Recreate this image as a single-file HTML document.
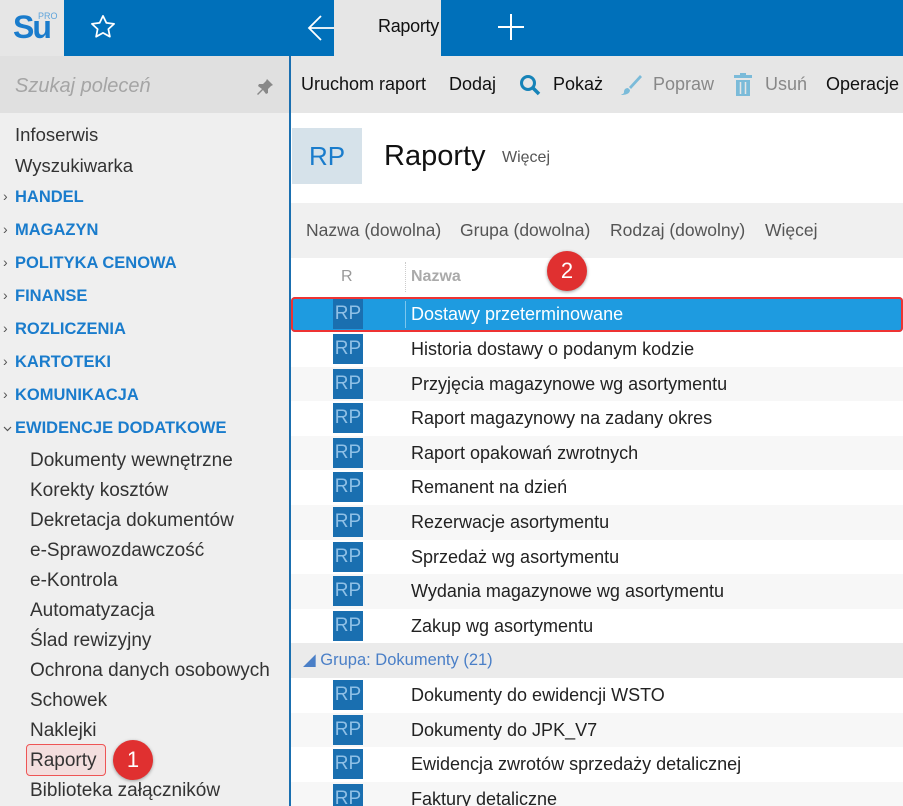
<!DOCTYPE html>
<html><head><meta charset="utf-8"><style>
*{margin:0;padding:0;box-sizing:border-box}
html,body{width:903px;height:806px;overflow:hidden}
body{font-family:"Liberation Sans",sans-serif;background:#fff;position:relative;color:#222}
.a{position:absolute;white-space:nowrap}
.side{left:0;top:113px;width:290px;height:693px;background:#efefef}
.si{left:15px;font-size:18.5px;color:#333}
.cat{left:15px;font-size:16.5px;font-weight:bold;color:#1a7ccc}
.chev{left:3px;font-size:14px;color:#555}
.sub{left:30px;font-size:19px;color:#333}
.row{left:291px;width:612px;height:34.6px;font-size:18px}
.row .ic{position:absolute;left:42px;top:2px;width:30px;height:30px;background:#1a6fb0;color:#8fc0e6;font-size:19px;text-align:center;line-height:30px}
.row .t{position:absolute;left:120px;top:7px}
.tb{top:74px;font-size:18px;color:#111}
.ft{top:220px;font-size:17.5px;color:#555}
</style></head><body>
<div class="a" style="left:0;top:0;width:64px;height:56px;background:#e6e6e6"></div>
<div class="a" style="left:13px;top:9px;font-size:32px;font-weight:bold;color:#1a7ccc;letter-spacing:-2px">Su</div>
<div class="a" style="left:38px;top:11px;font-size:9px;color:#5fa4db">PRO</div>
<div class="a" style="left:64px;top:0;width:270px;height:56px;background:#0070ba"></div>
<svg class="a" style="left:89px;top:13px" width="28" height="28" viewBox="0 0 24 24"><path d="M12 2.5l2.9 6 6.6.8-4.9 4.5 1.3 6.5L12 17l-5.9 3.3 1.3-6.5L2.5 9.3l6.6-.8z" fill="none" stroke="#fff" stroke-width="1.5" stroke-linejoin="round"/></svg>
<svg class="a" style="left:307px;top:14px" width="34" height="28" viewBox="0 0 34 28"><path d="M2 14h30M14 2L2 14l12 12" fill="none" stroke="#fff" stroke-width="1.8"/></svg>
<div class="a" style="left:334px;top:0;width:107px;height:56px;background:#e6e6e6"></div>
<div class="a" style="left:378px;top:16px;font-size:18px;color:#111;letter-spacing:-0.3px">Raporty</div>
<div class="a" style="left:441px;top:0;width:462px;height:56px;background:#0070ba"></div>
<div class="a" style="left:498px;top:14px;width:26px;height:26px">
<div class="a" style="left:12px;top:0;width:2px;height:26px;background:#fff"></div><div class="a" style="left:0;top:12px;width:26px;height:2px;background:#fff"></div></div>
<div class="a" style="left:0;top:56px;width:290px;height:57px;background:#e0e0e0"></div>
<div class="a" style="left:15px;top:75px;font-size:20px;font-style:italic;color:#a5a5a5">Szukaj poleceń</div>
<svg class="a" style="left:255px;top:77px" width="20" height="20" viewBox="0 0 20 20"><path d="M12 2l6 6-2 1-3 3 0 4-2 1-3-4-5 5-1-1 5-5-4-3 1-2 4 0 3-3z" fill="#888"/></svg>
<div class="a side"></div>
<div class="a" style="left:289px;top:56px;width:2px;height:750px;background:#1a6fb0"></div>
<div class="a si" style="top:124px">Infoserwis</div>
<div class="a si" style="top:155px">Wyszukiwarka</div>
<div class="a chev" style="top:188px">›</div><div class="a cat" style="top:188px">HANDEL</div>
<div class="a chev" style="top:221px">›</div><div class="a cat" style="top:221px">MAGAZYN</div>
<div class="a chev" style="top:254px">›</div><div class="a cat" style="top:254px">POLITYKA CENOWA</div>
<div class="a chev" style="top:287px">›</div><div class="a cat" style="top:287px">FINANSE</div>
<div class="a chev" style="top:320px">›</div><div class="a cat" style="top:320px">ROZLICZENIA</div>
<div class="a chev" style="top:353px">›</div><div class="a cat" style="top:353px">KARTOTEKI</div>
<div class="a chev" style="top:386px">›</div><div class="a cat" style="top:386px">KOMUNIKACJA</div>
<svg class="a" style="left:3px;top:425px" width="9" height="8" viewBox="0 0 9 8"><path d="M1 2l3.5 3.5L8 2" fill="none" stroke="#555" stroke-width="1.2"/></svg>
<div class="a cat" style="top:419px">EWIDENCJE DODATKOWE</div>
<div class="a sub" style="top:450px">Dokumenty wewnętrzne</div>
<div class="a sub" style="top:480px">Korekty kosztów</div>
<div class="a sub" style="top:510px">Dekretacja dokumentów</div>
<div class="a sub" style="top:540px">e-Sprawozdawczość</div>
<div class="a sub" style="top:570px">e-Kontrola</div>
<div class="a sub" style="top:600px">Automatyzacja</div>
<div class="a sub" style="top:630px">Ślad rewizyjny</div>
<div class="a sub" style="top:660px">Ochrona danych osobowych</div>
<div class="a sub" style="top:690px">Schowek</div>
<div class="a sub" style="top:720px">Naklejki</div>
<div class="a" style="left:26px;top:744px;width:80px;height:32px;border:1.5px solid #e55;border-radius:4px;background:#f3dede"></div>
<div class="a sub" style="top:750px">Raporty</div>
<div class="a" style="left:113px;top:740px;width:40px;height:40px;border-radius:50%;background:#e03030;color:#fff;font-size:22px;text-align:center;line-height:40px;box-shadow:0 1px 3px #999">1</div>
<div class="a sub" style="top:780px">Biblioteka załączników</div>
<div class="a" style="left:291px;top:56px;width:612px;height:57px;background:#e6e6e6"></div>
<div class="a tb" style="left:301px">Uruchom raport</div>
<div class="a tb" style="left:449px">Dodaj</div>
<svg class="a" style="left:518px;top:73px" width="24" height="24" viewBox="0 0 24 24"><circle cx="10" cy="10" r="6.5" fill="none" stroke="#1683b8" stroke-width="3"/><path d="M15 15l6 6" stroke="#1683b8" stroke-width="3.5"/></svg>
<div class="a tb" style="left:553px">Pokaż</div>
<svg class="a" style="left:619px;top:73px" width="24" height="24" viewBox="0 0 24 24"><path d="M21 2L10 14l2 2L23 4z M9 15c-3 0-4 2-4 4s-2 2-3 3c4 0 9-1 9-5z" fill="#7bbbd9"/></svg>
<div class="a tb" style="left:653px;color:#888">Popraw</div>
<svg class="a" style="left:733px;top:73px" width="20" height="24" viewBox="0 0 20 24"><rect x="1" y="2" width="18" height="3" fill="#7bbbd9"/><rect x="7" y="0" width="6" height="2" fill="#7bbbd9"/><path d="M3 7h14v16H3z" fill="#7bbbd9"/><path d="M7.5 9v12M12.5 9v12" stroke="#e6e6e6" stroke-width="1.5"/></svg>
<div class="a tb" style="left:765px;color:#888">Usuń</div>
<div class="a tb" style="left:826px">Operacje</div>
<div class="a" style="left:292px;top:128px;width:70px;height:56px;background:#d6e2ea;color:#1a7ccc;font-size:26px;text-align:center;line-height:56px">RP</div>
<div class="a" style="left:384px;top:140px;font-size:29px;color:#111">Raporty</div>
<div class="a" style="left:502px;top:149px;font-size:16px;color:#555">Więcej</div>
<div class="a" style="left:291px;top:203px;width:612px;height:55px;background:#f0f0f0"></div>
<div class="a ft" style="left:306px">Nazwa (dowolna)</div>
<div class="a ft" style="left:460px">Grupa (dowolna)</div>
<div class="a ft" style="left:610px">Rodzaj (dowolny)</div>
<div class="a ft" style="left:765px">Więcej</div>
<div class="a" style="left:341px;top:268px;font-size:16px;color:#999">R</div>
<div class="a" style="left:405px;top:262px;height:30px;border-left:1px dotted #ccc"></div>
<div class="a" style="left:411px;top:268px;font-size:16px;color:#aaa;font-weight:bold">Nazwa</div>
<div class="a" style="left:547px;top:251px;width:40px;height:40px;border-radius:50%;background:#e03030;color:#fff;font-size:22px;text-align:center;line-height:40px;box-shadow:0 1px 3px #999">2</div>
<div class="a row" style="top:297px;background:#1e9be0;color:#fff;box-shadow:inset 0 0 0 2px #e33;border-radius:4px"><div class="ic">RP</div><div class="a" style="left:114px;top:4px;height:27px;border-left:1px solid #7cc6ee"></div><div class="t">Dostawy przeterminowane</div></div>
<div class="a row" style="top:332px"><div class="ic">RP</div><div class="t">Historia dostawy o podanym kodzie</div></div>
<div class="a row" style="top:366.6px;background:#f7f7f7"><div class="ic">RP</div><div class="t">Przyjęcia magazynowe wg asortymentu</div></div>
<div class="a row" style="top:401.2px"><div class="ic">RP</div><div class="t">Raport magazynowy na zadany okres</div></div>
<div class="a row" style="top:435.8px;background:#f7f7f7"><div class="ic">RP</div><div class="t">Raport opakowań zwrotnych</div></div>
<div class="a row" style="top:470.4px"><div class="ic">RP</div><div class="t">Remanent na dzień</div></div>
<div class="a row" style="top:505px;background:#f7f7f7"><div class="ic">RP</div><div class="t">Rezerwacje asortymentu</div></div>
<div class="a row" style="top:539.6px"><div class="ic">RP</div><div class="t">Sprzedaż wg asortymentu</div></div>
<div class="a row" style="top:574.2px;background:#f7f7f7"><div class="ic">RP</div><div class="t">Wydania magazynowe wg asortymentu</div></div>
<div class="a row" style="top:608.8px"><div class="ic">RP</div><div class="t">Zakup wg asortymentu</div></div>
<div class="a row" style="top:643.4px;background:#ebebeb;color:#4a7fc7;font-size:16.5px"><div class="t" style="left:12px">◢ Grupa: Dokumenty (21)</div></div>
<div class="a row" style="top:678px"><div class="ic">RP</div><div class="t">Dokumenty do ewidencji WSTO</div></div>
<div class="a row" style="top:712.6px;background:#f7f7f7"><div class="ic">RP</div><div class="t">Dokumenty do JPK_V7</div></div>
<div class="a row" style="top:747.2px"><div class="ic">RP</div><div class="t">Ewidencja zwrotów sprzedaży detalicznej</div></div>
<div class="a row" style="top:781.8px;background:#f7f7f7"><div class="ic">RP</div><div class="t">Faktury detaliczne</div></div>
</body></html>
